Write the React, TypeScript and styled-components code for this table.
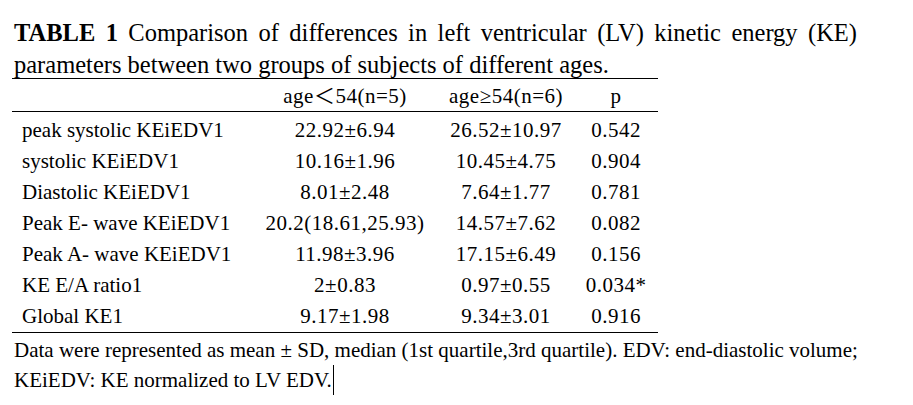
import * as React from 'react';
import styled, {createGlobalStyle} from 'styled-components';

const GlobalStyle = createGlobalStyle`
  html, body {
    margin: 0;
    padding: 0;
    background: #fff;
  }
  body {
    font-family: "Liberation Serif", "Noto Sans CJK SC", serif;
    color: #000;
  }
`;

const Page = styled.div`
  width: 913px;
  height: 405px;
  padding-left: 12px;
  box-sizing: border-box;
  overflow: hidden;
`;

const Caption = styled.p`
  margin: 0 0 -3px 2px;
  padding-top: 17px;
  width: 843px;
  font-size: 24.5px;
  line-height: 32px;
  text-align: justify;
`;

const CaptionLabel = styled.b`
  font-weight: 700;
`;

const Table = styled.div`
  width: 646px;
  border-top: 1px solid #000;
  border-bottom: 1px solid #000;
  font-size: 21px;
`;

const Body = styled.div`
  padding-top: 3px;
`;

const Row = styled.div<{$head?: boolean}>`
  display: grid;
  grid-template-columns: 251px 164px 158px 62px 1fr;
  line-height: ${p => (p.$head ? '28px' : '31px')};
  padding: ${p => (p.$head ? '3px 0 1px' : '0')};
  border-bottom: ${p => (p.$head ? '1px solid #000' : 'none')};
  white-space: nowrap;
`;

const Label = styled.span`
  padding-left: 10px;
`;

const Value = styled.span`
  text-align: center;
  letter-spacing: 0.5px;
`;

const Note = styled.p`
  margin: 0 0 0 2px;
  padding-top: 2px;
  font-size: 21px;
  line-height: 30px;
  white-space: nowrap;
`;

const Caret = styled.span`
  display: inline-block;
  width: 0;
  height: 30px;
  border-left: 1px solid #000;
  vertical-align: top;
  margin-left: 1px;
`;

const rows: [string, string, string, string][] = [
  ['peak systolic KEiEDV1', '22.92±6.94', '26.52±10.97', '0.542'],
  ['systolic KEiEDV1', '10.16±1.96', '10.45±4.75', '0.904'],
  ['Diastolic KEiEDV1', '8.01±2.48', '7.64±1.77', '0.781'],
  ['Peak E- wave KEiEDV1', '20.2(18.61,25.93)', '14.57±7.62', '0.082'],
  ['Peak A- wave KEiEDV1', '11.98±3.96', '17.15±6.49', '0.156'],
  ['KE E/A ratio1', '2±0.83', '0.97±0.55', '0.034*'],
  ['Global KE1', '9.17±1.98', '9.34±3.01', '0.916'],
];

const App: React.FC = () => {
  return <Page>
    <GlobalStyle/>
    <Caption>
      <CaptionLabel>TABLE 1</CaptionLabel> Comparison of differences in left ventricular (LV) kinetic energy (KE) parameters between two groups of subjects of different ages.
    </Caption>
    <Table>
      <Row $head>
        <Label/>
        <Value>age＜54(n=5)</Value>
        <Value>age≥54(n=6)</Value>
        <Value>p</Value>
      </Row>
      <Body>
        {rows.map(r => <Row key={r[0]}>
          <Label>{r[0]}</Label>
          <Value>{r[1]}</Value>
          <Value>{r[2]}</Value>
          <Value>{r[3]}</Value>
        </Row>)}
      </Body>
    </Table>
    <Note>
      Data were represented as mean ± SD, median (1st quartile,3rd quartile). EDV: end-diastolic volume;<br/>
      KEiEDV: KE normalized to LV EDV.<Caret/>
    </Note>
  </Page>;
};

export default App;
